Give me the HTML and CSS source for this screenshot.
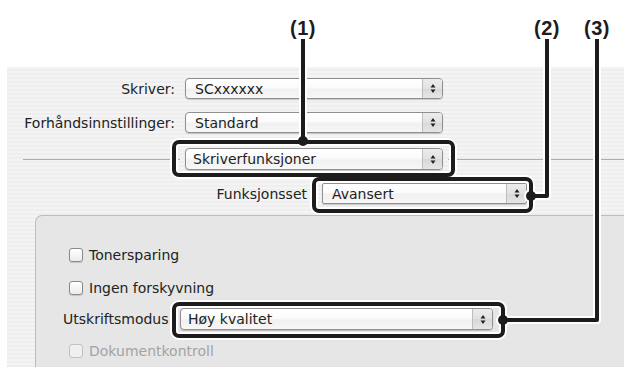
FILE: index.html
```html
<!DOCTYPE html>
<html lang="no">
<head>
<meta charset="utf-8">
<title>Skriverfunksjoner</title>
<link rel="stylesheet" href="styles.css">
</head>
<body>
<div class="page">
  <div class="top"></div>
  <div class="window">
    <div class="row row-a">
      <span class="lbl">Skriver:</span>
      <div class="popup"><span class="ptext">SCxxxxxx</span><span class="arrows"><svg width="6" height="11" viewBox="0 0 6 11"><path d="M3 1 L5.5 4.5 H0.5 Z M0.5 6.5 H5.5 L3 10 Z" fill="#222"/></svg></span></div>
    </div>
    <div class="row row-a gap13">
      <span class="lbl">Forhåndsinnstillinger:</span>
      <div class="popup"><span class="ptext">Standard</span><span class="arrows"><svg width="6" height="11" viewBox="0 0 6 11"><path d="M3 1 L5.5 4.5 H0.5 Z M0.5 6.5 H5.5 L3 10 Z" fill="#222"/></svg></span></div>
    </div>
    <div class="sep-row">
      <span class="sep sep-left"></span>
      <div class="popup pop-sep"><span class="ptext">Skriverfunksjoner</span><span class="arrows"><svg width="6" height="11" viewBox="0 0 6 11"><path d="M3 1 L5.5 4.5 H0.5 Z M0.5 6.5 H5.5 L3 10 Z" fill="#222"/></svg></span></div>
      <span class="sep sep-right"></span>
    </div>
    <div class="row row-b">
      <span class="lbl">Funksjonsset</span>
      <div class="popup square"><span class="ptext">Avansert</span><span class="arrows"><svg width="6" height="11" viewBox="0 0 6 11"><path d="M3 1 L5.5 4.5 H0.5 Z M0.5 6.5 H5.5 L3 10 Z" fill="#222"/></svg></span></div>
    </div>
    <div class="panel">
      <label class="check"><span class="box"></span><span>Tonersparing</span></label>
      <label class="check gap15"><span class="box"></span><span>Ingen forskyvning</span></label>
      <div class="mode-row">
        <span class="mode-lbl">Utskriftsmodus</span>
        <div class="popup pop-mode"><span class="ptext">Høy kvalitet</span><span class="arrows"><svg width="6" height="11" viewBox="0 0 6 11"><path d="M3 1 L5.5 4.5 H0.5 Z M0.5 6.5 H5.5 L3 10 Z" fill="#222"/></svg></span></div>
      </div>
      <label class="check disabled"><span class="box"></span><span>Dokumentkontroll</span></label>
    </div>
  </div>

  <div class="callouts">
    <span class="num n1">(1)</span>
    <span class="num n2">(2)</span>
    <span class="num n3">(3)</span>
    <svg class="lines" width="624" height="367" viewBox="0 0 624 367">
      <g fill="none" stroke="#fff" stroke-width="8" stroke-linejoin="round">
        <rect x="174" y="142" width="279" height="33" rx="5"/>
        <rect x="314" y="179" width="217" height="32" rx="5"/>
        <rect x="174" y="304" width="329" height="32" rx="5"/>
        <path d="M303 40 V141"/>
        <path d="M547 40 V196 H531"/>
        <path d="M597 40 V320 H503"/>
      </g>
      <g fill="#fff">
        <circle cx="303" cy="141" r="7"/>
        <circle cx="531" cy="196" r="7"/>
        <circle cx="503" cy="320" r="7"/>
      </g>
      <g fill="none" stroke="#1e1b1c" stroke-width="4" stroke-linejoin="round">
        <rect x="174" y="142" width="279" height="33" rx="5"/>
        <rect x="314" y="179" width="217" height="32" rx="5"/>
        <rect x="174" y="304" width="329" height="32" rx="5"/>
        <path d="M303 39 V141"/>
        <path d="M547 39 V196 H531"/>
        <path d="M597 39 V320 H503"/>
      </g>
      <g fill="#1e1b1c">
        <circle cx="303" cy="141" r="5"/>
        <circle cx="531" cy="196" r="5"/>
        <circle cx="503" cy="320" r="5"/>
      </g>
    </svg>
  </div>
</div>
</body>
</html>
```
FILE: styles.css
```css
* { box-sizing: border-box; }
html, body { margin: 0; padding: 0; background: #fff; }
body { width: 624px; height: 367px; overflow: hidden; }

.page {
  position: relative;
  width: 624px;
  height: 367px;
  font-family: "DejaVu Sans", "Liberation Sans", sans-serif;
  font-size: 14px;
  color: #222222;
}

.top { height: 67px; }

.window {
  margin-left: 7px;
  height: 300px;
  padding-top: 11px;
  background-color: #eeeeee;
  background-image: repeating-linear-gradient(to bottom, rgba(255,255,255,0.35) 0 2px, rgba(0,0,0,0) 2px 4px);
  display: flex;
  flex-direction: column;
}

.row {
  display: grid;
  align-items: center;
  height: 21px;
}
.row-a { grid-template-columns: 168px 258px; column-gap: 10px; }
.gap13 { margin-top: 13px; }
.row-b { grid-template-columns: 300px 205px; column-gap: 15px; margin-top: 13px; }

.lbl { text-align: right; white-space: nowrap; }

.popup {
  display: flex;
  align-items: center;
  height: 21px;
  border: 1px solid #8f8f8f;
  border-radius: 4px;
  background: linear-gradient(to bottom, #ffffff 0%, #fbfbfb 45%, #f1f1f1 55%, #f7f7f7 100%);
  box-shadow: 0 1px 1px rgba(0,0,0,0.18);
  overflow: hidden;
}
.popup.square { border-radius: 2px; }
.ptext { flex: 1; padding-left: 9px; white-space: nowrap; }
.arrows {
  width: 20px;
  height: 100%;
  border-left: 1px solid #bdbdbd;
  background: linear-gradient(to bottom, #ececec 0%, #e2e2e2 50%, #d8d8d8 52%, #e6e6e6 100%);
  display: flex;
  align-items: center;
  justify-content: center;
}

.sep-row {
  display: flex;
  align-items: center;
  height: 22px;
  margin-top: 15px;
  padding-left: 16px;
}
.sep { height: 1px; background: #ababab; }
.sep-left { width: 157px; margin-right: 5px; }
.sep-right { flex: 1; margin-left: 5px; }
.pop-sep { width: 258px; height: 22px; }
.pop-sep .ptext { padding-left: 7px; }

.panel {
  margin-top: 11px;
  margin-left: 28px;
  flex: 1;
  background: #e6e6e6;
  border-top: 1px solid #bcbcbc;
  border-left: 1px solid #bcbcbc;
  border-top-left-radius: 7px;
  padding-top: 30px;
  padding-left: 33px;
  display: flex;
  flex-direction: column;
}

.check {
  display: flex;
  align-items: center;
  gap: 6px;
  height: 18px;
}
.gap15 { margin-top: 15px; }
.box {
  width: 14px;
  height: 14px;
  border: 1px solid #8a8a8a;
  border-radius: 3px;
  background: linear-gradient(to bottom, #ffffff, #ececec);
  box-shadow: 0 1px 1px rgba(0,0,0,0.15);
}
.check.disabled { color: #a3a3a3; margin-top: 12px; }
.check.disabled .box { border-color: #c2c2c2; background: #efefef; box-shadow: none; }

.mode-row {
  display: flex;
  align-items: center;
  gap: 10px;
  height: 22px;
  margin-top: 11px;
  margin-left: -6px;
}
.mode-lbl { width: 107px; white-space: nowrap; }
.pop-mode { width: 313px; height: 22px; }
.pop-mode .ptext { padding-left: 7px; }

.callouts {
  position: absolute;
  left: 0;
  top: 0;
  width: 624px;
  height: 367px;
  pointer-events: none;
}
.lines { position: absolute; left: 0; top: 0; }
.num {
  position: absolute;
  top: 17px;
  font-family: "Liberation Sans", Arial, sans-serif;
  font-weight: bold;
  font-size: 20px;
  letter-spacing: 0.5px;
  color: #1e1b1c;
  transform: translateX(-50%);
}
.n1 { left: 303px; }
.n2 { left: 547px; }
.n3 { left: 597px; }
```
